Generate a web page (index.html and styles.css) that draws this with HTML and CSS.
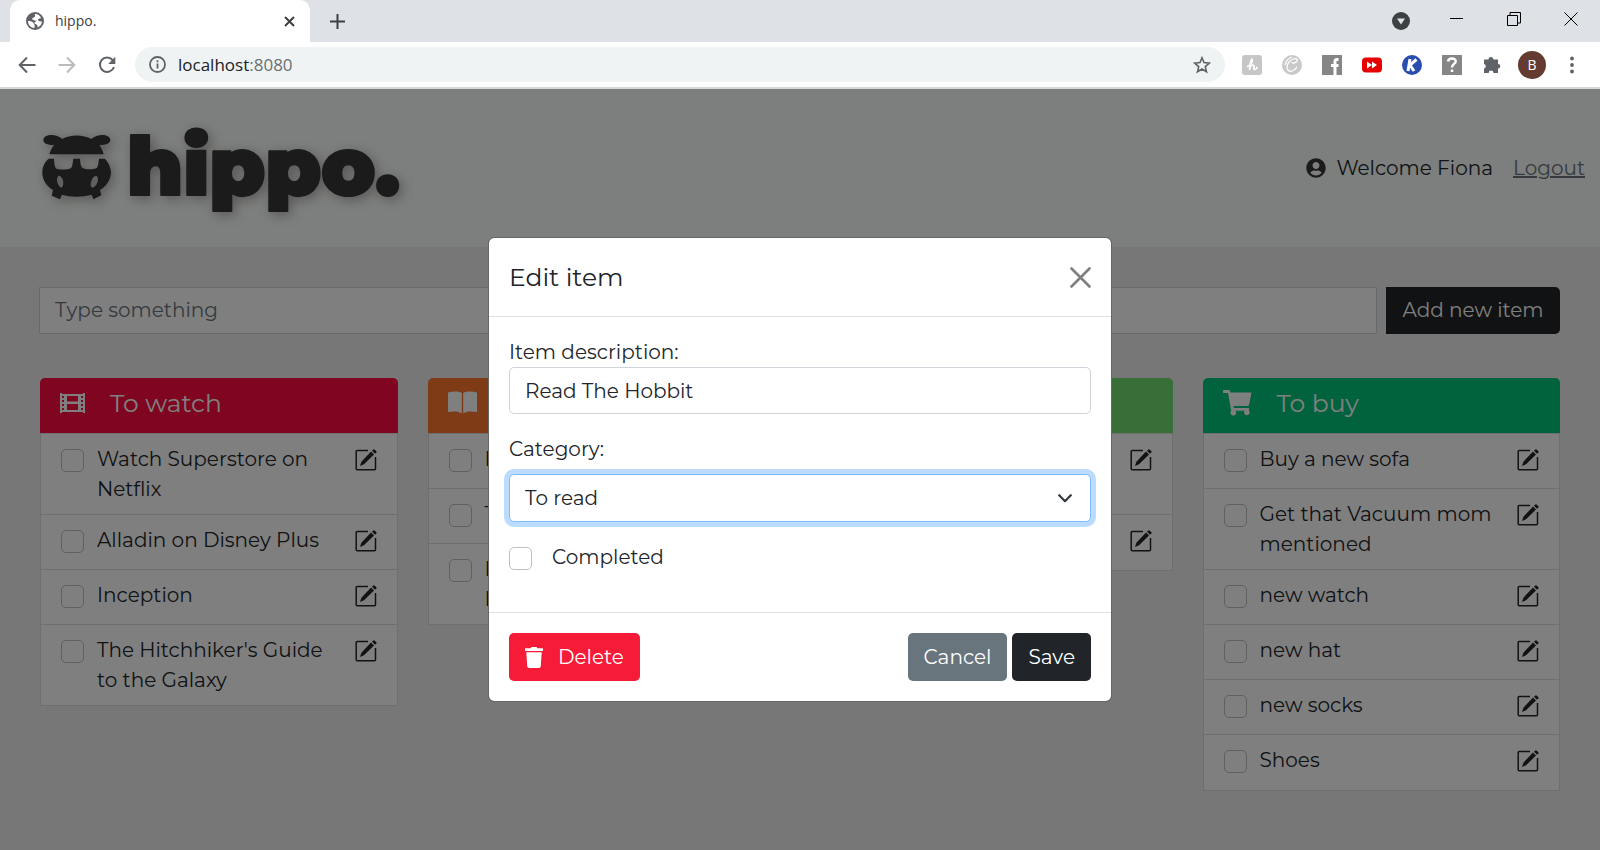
FILE: index.html
```html
<!DOCTYPE html>
<html lang="en">
<head>
<meta charset="utf-8">
<title>hippo.</title>
<link rel="stylesheet" href="styles.css">
</head>
<body>
<svg class="defs" aria-hidden="true">
  <symbol id="edit" viewBox="0 0 22 22">
    <path d="M13 1.500H2.200a1 1 0 0 0-1 1V19.800a1 1 0 0 0 1 1H19.500a1 1 0 0 0 1-1V8" fill="none" stroke="currentColor" stroke-width="1.500"/>
    <path d="M16 2.600 19 5.500 9 15.300 5 17l1.400-4.300z M17 1.700 18.400.4a.8.8 0 0 1 1.100 0l1.900 1.900a.8.8 0 0 1 0 1.100L20 4.700z" fill="currentColor"/>
  </symbol>
</svg>
<div class="browser">
  <div class="tabstrip">
    <div class="tab">
      <svg width="18" height="18" viewBox="0 0 18 18"><circle cx="9" cy="9" r="9" fill="#5f6368"/><path d="M2 9c2 0 4 0 5 1.500S9 12 8.500 16C5 16 2 13 2 9zM9 2c3 0 5.500 2 6.300 4.500C14 6 13 7 12 7.500S14 10 16 9.300C15.700 12.500 14 14.500 11.500 15.500c.5-2-.5-3-2-3.500S8 10 10 9.500 8 8.500 6.500 7.500 8 5.500 9 4.500 8 3 9 2z" fill="#fff"/></svg>
      <span class="tab-title">hippo.</span>
      <button class="plain" aria-label="Close tab"><svg width="11" height="11" viewBox="0 0 11 11"><path d="M1 1l9 9M10 1l-9 9" stroke="#3c4043" stroke-width="2"/></svg></button>
    </div>
    <button class="plain new-tab" aria-label="New tab"><svg width="15" height="15" viewBox="0 0 15 15"><path d="M7.500 0v15M0 7.500h15" stroke="#3c4043" stroke-width="2"/></svg></button>
    <div class="window-controls">
      <button class="plain" aria-label="Tab search"><svg width="18" height="18" viewBox="0 0 18 18"><circle cx="9" cy="9" r="9" fill="#3c4043"/><path d="M5 6.500h8L9 12.500z" fill="#dee1e6"/></svg></button>
      <button class="plain" aria-label="Minimize"><svg width="14" height="14" viewBox="0 0 14 14"><path d="M0 6.500h13" stroke="#000"/></svg></button>
      <button class="plain" aria-label="Restore"><svg width="14" height="14" viewBox="0 0 14 14"><path d="M.5 3.500h10v10h-10zM3 3V.500h10.500V11H11" fill="none" stroke="#000"/></svg></button>
      <button class="plain" aria-label="Close"><svg width="14" height="14" viewBox="0 0 14 14"><path d="M.5.5l13 13M13.500.5l-13 13" stroke="#000"/></svg></button>
    </div>
  </div>
  <div class="toolbar">
    <button class="plain" aria-label="Back"><svg width="18" height="18" viewBox="0 0 18 18"><path d="M17.500 9H2M9 1.500 1.700 9 9 16.500" fill="none" stroke="#5f6368" stroke-width="2"/></svg></button>
    <button class="plain" aria-label="Forward"><svg width="18" height="18" viewBox="0 0 18 18"><path d="M.5 9H16M9 1.500 16.300 9 9 16.500" fill="none" stroke="#babcbe" stroke-width="2"/></svg></button>
    <button class="plain" aria-label="Reload"><svg width="18" height="18" viewBox="0 0 18 18"><path d="M14.600 4A7.200 7.200 0 1 0 16 11" fill="none" stroke="#5f6368" stroke-width="2"/><path d="M17.300.8V8H10.200z" fill="#5f6368"/></svg></button>
    <div class="omnibox">
      <svg width="17" height="17" viewBox="0 0 17 17"><circle cx="8.500" cy="8.500" r="7.500" fill="none" stroke="#5f6368" stroke-width="1.800"/><path d="M8.500 7.500v5M8.500 4.300v2" stroke="#5f6368" stroke-width="1.800"/></svg>
      <span class="url">localhost<span class="port">:8080</span></span>
      <button class="plain" aria-label="Bookmark"><svg width="18" height="18" viewBox="0 0 18 18"><path d="M9 1.800 11 6.600l5.300.5-4 3.500 1.200 5.200L9 13l-4.500 2.800 1.200-5.200-4-3.500 5.300-.5z" fill="none" stroke="#5f6368" stroke-width="1.600"/></svg></button>
    </div>
    <div class="extensions">
      <svg width="20" height="20" viewBox="0 0 20 20"><rect width="20" height="20" rx="3" fill="#c6c6c6"/><path d="M5.500 11.500c3-1 5-4 4.800-6.500S8 6.500 7.500 15c.5-3 2-5 3.500-5s1 2 .8 3.500S14 15 15 12.500" fill="none" stroke="#fff" stroke-width="1.700" stroke-linecap="round"/></svg>
      <svg width="20" height="20" viewBox="0 0 20 20"><circle cx="10" cy="10" r="10" fill="#c9c9c9"/><path d="M10 7c0 2 4 1 5-1s-1-3-4-2-6 5-6 8 2 5 5 4 4-3 5-4M3 10c1-4 4-7 7-8" fill="none" stroke="#fff" stroke-width="1.300"/></svg>
      <svg width="20" height="20" viewBox="0 0 20 20"><path fill="#868686" d="M0 0h20v20H0z"/><path d="M16.500 4.500H15c-1.500 0-2 .8-2 2V20M9 10.500h7.500" fill="none" stroke="#fff" stroke-width="3"/></svg>
      <svg width="20" height="20" viewBox="0 0 20 20"><rect y="2.500" width="20" height="15" rx="4" fill="#e60000"/><path d="M5 6.500l5 3.500-5 3.500zM10 6.500l5 3.500-5 3.500z" fill="#fff"/></svg>
      <svg width="20" height="20" viewBox="0 0 20 20"><circle cx="10" cy="10" r="10" fill="#2a4db0"/><path d="M8 4 6 16M14.500 4.500 8 10l4 6" fill="none" stroke="#fff" stroke-width="3"/></svg>
      <svg width="20" height="20" viewBox="0 0 20 20"><path fill="#868686" d="M0 0h20v20H0z"/><path d="M6 6.500C6.500 2.500 14 2.500 13.700 6.500 13.500 9 10 9 10 12.500M10 14.500V17" fill="none" stroke="#fff" stroke-width="2.500"/></svg>
      <svg width="20" height="20" viewBox="0 0 20 20"><path d="M2 4.500h4.500a2.500 2.500 0 0 1 5 0H16V9a2.300 2.300 0 0 1 0 4.600V18h-4.500a2.400 2.400 0 0 0-4.800 0H2v-4.500A2.300 2.300 0 0 0 2 9z" fill="#5f6368"/></svg>
      <button class="avatar" aria-label="Profile">B</button>
      <svg width="20" height="20" viewBox="0 0 20 20"><g fill="#5f6368"><circle cx="10" cy="3.500" r="1.900"/><circle cx="10" cy="10" r="1.900"/><circle cx="10" cy="16.500" r="1.900"/></g></svg>
    </div>
  </div>
</div>
<div class="page">
  <header class="site-header">
    <a class="logo" href="#" aria-label="hippo home">
      <svg width="380" height="110" viewBox="0 0 380 110">
        <g transform="translate(2 0) scale(.333333)">
          <g transform="translate(-66 -31)" fill="#373737">
            <path d="M88 167C93 150 100 143 102 138 85 141 69 133 70 123 71 106 108 103 127 121 148 107 192 107 214 121 233 103 270 106 271 123 272 133 256 141 238 138 243 145 248 155 251 167z"/>
            <path fill-rule="evenodd" d="M86 180H102C103 200 105 209 112 211 126 214 146 213 152 209 158 204 158 192 160 180H180C181 192 182 204 188 208 197 213 217 213 228 209 235 206 235 192 237 180H254C266 190 273 208 273 222 272 245 257 264 240 274L244 290 220 302 215 288C188 296 152 296 126 288L120 302 95 291 99 274C80 262 67 244 67 222 67 204 74 190 86 180zM113 235C108 244 113 260 123 267 135 264 130 235 119 232 117 231 115 232 113 235zM217 240C210 252 211 265 217 267 226 267 237 250 233 236 230 229 222 231 217 240z"/>
          </g>
        </g>
        <text class="wordmark" x="87" y="86">hippo.</text>
      </svg>
    </a>
    <div class="account">
      <svg width="20" height="20" viewBox="0 0 496 512"><path fill="#373737" d="M248 8C111 8 0 119 0 256s111 248 248 248 248-111 248-248S385 8 248 8zm0 96c48.600 0 88 39.400 88 88s-39.400 88-88 88-88-39.400-88-88 39.400-88 88-88zm0 344c-58.700 0-111.300-26.600-146.500-68.200 18.800-35.400 55.600-59.800 98.500-59.800 2.400 0 4.800.4 7.100 1.100 13 4.200 26.600 6.900 40.900 6.900 14.300 0 28-2.700 40.900-6.900 2.300-.7 4.700-1.100 7.100-1.100 42.900 0 79.700 24.400 98.500 59.800C359.300 421.400 306.700 448 248 448z"/></svg>
      <span>Welcome Fiona</span>
      <a class="logout" href="#">Logout</a>
    </div>
  </header>
  <main>
    <form class="add-form">
      <input type="text" placeholder="Type something" aria-label="New item">
      <button type="button">Add new item</button>
    </form>
    <div class="columns">
      <section>
        <h2 class="watch"><svg width="25" height="20" viewBox="0 0 25 20"><path fill="currentColor" fill-rule="evenodd" d="M0 0H2V1H23V0H25V20H23V19H2V20H0zM2 3v2h2V3zM2 7v2h2V7zM2 11v2h2v-2zM2 15v2h2v-2zM21 3v2h2V3zM21 7v2h2V7zM21 11v2h2v-2zM21 15v2h2v-2zM7 3v5.500h11V3zM7 11v6h11v-6z"/></svg>To watch</h2>
        <ul>
          <li><input type="checkbox" id="w1"><label for="w1">Watch Superstore on Netflix</label><button aria-label="Edit"><svg><use href="#edit"/></svg></button></li>
          <li><input type="checkbox" id="w2"><label for="w2">Alladin on Disney Plus</label><button aria-label="Edit"><svg><use href="#edit"/></svg></button></li>
          <li><input type="checkbox" id="w3"><label for="w3">Inception</label><button aria-label="Edit"><svg><use href="#edit"/></svg></button></li>
          <li><input type="checkbox" id="w4"><label for="w4">The Hitchhiker's Guide to the Galaxy</label><button aria-label="Edit"><svg><use href="#edit"/></svg></button></li>
        </ul>
      </section>
      <section>
        <h2 class="read"><svg width="29" height="23" viewBox="0 0 29 23"><path fill="currentColor" d="M0 1.500C5 0 11 0 13.800 2V22.500C11 20 5 20 0 21zM29 1.500C24 0 18 0 15.200 2V22.500C18 20 24 20 29 21z"/></svg></h2>
        <ul>
          <li><input type="checkbox" id="r1"><label for="r1">R</label></li>
          <li><input type="checkbox" id="r2"><label for="r2">T</label></li>
          <li><input type="checkbox" id="r3"><label for="r3">D<br>N</label></li>
        </ul>
      </section>
      <section>
        <h2 class="eat"></h2>
        <ul>
          <li class="tall"><button aria-label="Edit"><svg><use href="#edit"/></svg></button></li>
          <li><button aria-label="Edit"><svg><use href="#edit"/></svg></button></li>
        </ul>
      </section>
      <section>
        <h2 class="buy"><svg width="29" height="26" viewBox="0 0 29 26"><path fill="currentColor" d="M1 0H6.500L7.500 2.500H28.500L26.500 13 25.500 16H10.500L10.800 18H26V20.500A2.800 2.800 0 1 1 21.500 20.800H12.500A2.800 2.800 0 1 1 8.200 20.800L5 3H1A1.500 1.500 0 0 1 1 0z"/></svg>To buy</h2>
        <ul>
          <li><input type="checkbox" id="b1"><label for="b1">Buy a new sofa</label><button aria-label="Edit"><svg><use href="#edit"/></svg></button></li>
          <li><input type="checkbox" id="b2"><label for="b2">Get that Vacuum mom mentioned</label><button aria-label="Edit"><svg><use href="#edit"/></svg></button></li>
          <li><input type="checkbox" id="b3"><label for="b3">new watch</label><button aria-label="Edit"><svg><use href="#edit"/></svg></button></li>
          <li><input type="checkbox" id="b4"><label for="b4">new hat</label><button aria-label="Edit"><svg><use href="#edit"/></svg></button></li>
          <li><input type="checkbox" id="b5"><label for="b5">new socks</label><button aria-label="Edit"><svg><use href="#edit"/></svg></button></li>
          <li><input type="checkbox" id="b6"><label for="b6">Shoes</label><button aria-label="Edit"><svg><use href="#edit"/></svg></button></li>
        </ul>
      </section>
    </div>
  </main>
  <div class="backdrop">
    <form class="modal" role="dialog" aria-labelledby="modal-title">
      <div class="modal-header">
        <h3 id="modal-title">Edit item</h3>
        <button type="button" class="plain" aria-label="Close"><svg width="21" height="21" viewBox="0 0 21 21"><path d="M1.500 1.500l18 18M19.500 1.500l-18 18" stroke="#7f7f7f" stroke-width="2.600" stroke-linecap="round"/></svg></button>
      </div>
      <div class="modal-body">
        <label for="desc">Item description:</label>
        <input class="control" type="text" id="desc" value="Read The Hobbit">
        <label class="category" for="cat">Category:</label>
        <div class="select-wrap">
          <select class="control focused" id="cat"><option>To read</option></select>
          <svg width="14" height="9" viewBox="0 0 14 9"><path d="M1.200 1.200 7 7.200l5.800-6" fill="none" stroke="#343a40" stroke-width="2.200" stroke-linecap="round" stroke-linejoin="round"/></svg>
        </div>
        <div class="check-row"><input type="checkbox" id="done"><label for="done">Completed</label></div>
      </div>
      <div class="modal-footer">
        <button type="button" class="btn danger"><svg width="18" height="21" viewBox="0 0 18 21"><path fill="#fff" d="M0 1.300H5.500L6.500 0h5l1 1.300H18V4H0zM1.300 5.200H16.700L15.800 19.200Q15.600 21 13.800 21H4.200Q2.400 21 2.200 19.200z"/></svg>Delete</button>
        <button type="button" class="btn secondary">Cancel</button>
        <button type="button" class="btn dark">Save</button>
      </div>
    </form>
  </div>
</div>
</body>
</html>
```
FILE: styles.css
```css
* { box-sizing: border-box; }
body {
  margin: 0;
  min-height: 100vh;
  display: flex;
  flex-direction: column;
  font: 400 20px/30px Montserrat, Inter, sans-serif;
  color: #212529;
}
button, input, select { font: inherit; color: inherit; }
svg { flex: none; display: block; }
.defs { position: absolute; width: 0; height: 0; }
.plain { background: none; border: 0; padding: 0; display: flex; }

.browser { font-family: "Open Sans", sans-serif; }
.tabstrip { height: 42px; background: #dee1e6; display: flex; align-items: center; padding-left: 10px; }
.tab {
  width: 300px;
  height: 42px;
  background: #fff;
  border-radius: 10px 10px 0 0;
  display: flex;
  align-items: center;
  gap: 11px;
  padding: 0 15px 0 16px;
  font-size: 14px;
  color: #3c4043;
}
.tab-title { flex: 1; }
.new-tab { margin-left: 20px; }
.window-controls { margin-left: auto; display: flex; align-items: center; gap: 43px; padding: 0 22px 4px 0; }
.window-controls button:first-child { margin: 4px -3px 0 0; }
.toolbar { height: 47px; background: #fff; border-bottom: 2px solid #d5d7da; display: flex; align-items: center; padding: 0 18px; gap: 22px; }
.omnibox {
  flex: 1;
  height: 35px;
  border-radius: 18px;
  background: #eff3f4;
  display: flex;
  align-items: center;
  gap: 12px;
  padding: 0 14px;
  font-size: 17px;
  margin-left: -3px;
}
.url { flex: 1; color: #202124; }
.port { color: #6b6f73; }
.extensions { display: flex; align-items: center; gap: 20px; margin-left: -5px; }
.avatar { width: 28px; height: 28px; border-radius: 50%; border: 0; background: #633b31; color: #fff; padding: 0; font-size: 14px; line-height: 28px; margin: 0 -4px; }

.page { position: relative; flex: 1; background: #eee; }
.site-header { height: 158px; background: #f8fefa; display: flex; justify-content: space-between; align-items: center; padding: 0 15px 0 40px; }
.logo { margin-bottom: 8px; filter: drop-shadow(3px 3px 6px rgba(80, 50, 60, .4)); }
.wordmark {
  font: 900 80px Montserrat, "DejaVu Sans", sans-serif;
  fill: #373737;
  stroke: #373737;
  stroke-width: 2px;
  stroke-linejoin: round;
}
.account { display: flex; align-items: center; gap: 10px; }
.logout { color: #6c757d; margin-left: 10px; }

main { padding: 40px 40px 0; }
.add-form { display: flex; gap: 9px; }
.add-form input { flex: 1; height: 47px; border: 1px solid #ced4da; background: #fff; padding: 0 15px 2px; margin-left: -1px; }
.add-form input::placeholder { color: #6c757d; opacity: 1; }
.add-form button { width: 174px; padding: 0 0 2px; border: 0; border-radius: 0 5px 5px 0; background: #212529; color: #fff; }
.columns { display: grid; grid-template-columns: repeat(4, 1fr); gap: 30px; align-items: start; margin-top: 44px; }
h2 { margin: 0; height: 55px; padding: 0 20px 6px; border-radius: 5px 5px 0 0; display: flex; align-items: center; gap: 25px; font-size: 25px; font-weight: 400; color: #fff; }
.watch { background: #ff0a43; }
.read { background: #ff742c; }
.eat { background: #70dc6e; }
.buy { background: #00c67a; }
ul { list-style: none; margin: 0; padding: 0; border: 1px solid #dfdfdf; background: #fff; }
li { min-height: 55px; padding: 10px 20px; display: flex; align-items: flex-start; border-bottom: 1px solid #dfdfdf; }
li:last-child { border-bottom: 0; }
li.tall { min-height: 81px; }
li label { flex: 1; margin: 0 20px 0 13px; }
li button { border: 0; background: none; padding: 0; margin: 5px 0 0 auto; color: #212529; }
li svg { width: 22px; height: 22px; }
input[type="checkbox"] { appearance: none; flex: none; width: 23px; height: 23px; margin: 5px 0 0; border: 1px solid #bfbfbf; border-radius: 5px; background: #fff; }

.backdrop { position: absolute; inset: 0; background: rgba(0, 0, 0, .5); display: flex; align-items: center; justify-content: center; }
.modal { width: 624px; background: #fff; border-radius: 6px; border: 1px solid #666; background-clip: padding-box; }
.modal-header { display: flex; align-items: center; justify-content: space-between; padding: 20px; height: 79px; border-bottom: 1px solid #dee2e6; }
h3 { margin: 0; font-size: 25px; font-weight: 400; }
.modal-body { padding: 20px 20px 40px; display: flex; flex-direction: column; }
.control { width: 100%; height: 47px; border: 1px solid #ced4da; border-radius: 5px; background: #fff; padding: 0 15px; appearance: none; display: block; }
.category { margin: 20px 0 10px; }
.select-wrap { position: relative; }
.select-wrap svg { position: absolute; right: 19px; top: 20px; pointer-events: none; }
.focused { height: 48px; border-color: #80bdff; box-shadow: 0 0 0 5px #bbdcff; outline: 0; }
.check-row { display: flex; gap: 20px; margin-top: 20px; }
.modal-footer { display: flex; gap: 5px; padding: 20px; border-top: 1px solid #dee2e6; }
.btn { height: 48px; border: 0; border-radius: 5px; padding: 0 16px; color: #fff; display: flex; align-items: center; gap: 15px; }
.danger { background: #f61b36; margin-right: auto; }
.secondary { background: #69757d; }
.dark { background: #212529; }
```
